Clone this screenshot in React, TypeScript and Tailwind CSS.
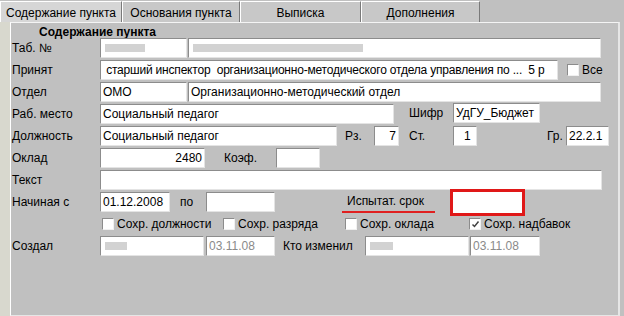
import React from "react";

const Inp = ({ w, children, right, gray, cls = "" }: { w: string; children?: React.ReactNode; right?: boolean; gray?: boolean; cls?: string }) => (
  <div
    className={`${w} h-[20px] shrink-0 bg-white border border-t-[#8c8c8c] border-l-[#8c8c8c] border-b-[#e4e4e4] border-r-[#e4e4e4] px-[2px] leading-[18px] whitespace-nowrap overflow-hidden ${right ? "text-right" : ""} ${gray ? "text-[#8a8a8a]" : "text-black"} ${cls}`}
  >
    {children}
  </div>
);

const Bar = ({ w }: { w: string }) => <div className={`${w} h-[8px] mt-[5px] ml-[2px] bg-[#d2d2d2]`} />;

const Lbl = ({ w, children, cls = "" }: { w: string; children?: React.ReactNode; cls?: string }) => (
  <div className={`${w} shrink-0 whitespace-nowrap ${cls}`}>{children}</div>
);

const Check = ({ checked }: { checked?: boolean }) => (
  <div className="w-[12px] h-[12px] shrink-0 bg-white border border-t-[#8c8c8c] border-l-[#8c8c8c] border-b-[#f0f0f0] border-r-[#f0f0f0] flex items-center justify-center">
    {checked && (
      <svg width="9" height="9" viewBox="0 0 9 9">
        <path d="M1.5 4.5 L3.5 6.5 L7.5 1.5" stroke="#404040" strokeWidth="1.5" fill="none" />
      </svg>
    )}
  </div>
);

const Row = ({ children, cls = "" }: { children: React.ReactNode; cls?: string }) => (
  <div className={`h-[22px] flex items-center ${cls}`}>{children}</div>
);

const Tab = ({ w, label, sel }: { w: string; label: string; sel?: boolean }) => (
  <div
    className={`${w} h-[21px] shrink-0 flex items-center justify-center pt-[2px] border-t border-l border-t-white border-l-white border-r border-r-[#7a7a7a] ${sel ? "bg-[#d6d6d6]" : "bg-[#c8c8c8]"}`}
  >
    {label}
  </div>
);

export default function App() {
  return (
    <div
      className="w-[624px] h-[316px] bg-[#c0c0c0] overflow-hidden text-[12px] text-black"
      style={{ fontFamily: '"Liberation Sans", Arial, sans-serif' }}
    >
      <div className="h-[22px] flex items-end">
        <Tab w="w-[122px]" label="Содержание пункта" sel />
        <Tab w="w-[118px]" label="Основания пункта" />
        <Tab w="w-[121px]" label="Выписка" />
        <Tab w="w-[119px]" label="Дополнения" />
      </div>
      <div className="flex h-[294px]">
        <div className="w-[10px] shrink-0 bg-[#d8d8ce]" />
        <div className="w-[610px] shrink-0 border-t border-l border-t-[#f4f4f4] border-l-white border-r-2 border-r-[#e6e6e6] border-b border-b-[#e6e6e6] pl-[1px]">
          <div className="h-[14px] pl-[27px] font-bold leading-[18px]">Содержание пункта</div>
          <Row>
            <Lbl w="w-[88px]">Таб. №</Lbl>
            <Inp w="w-[87px]"><Bar w="w-[40px]" /></Inp>
            <Inp w="w-[413px]" cls="ml-[1px]"><Bar w="w-[170px]" /></Inp>
          </Row>
          <Row>
            <Lbl w="w-[88px]">Принят</Lbl>
            <Inp w="w-[458px]" cls="tracking-[-0.2px]">&nbsp;старший инспектор &nbsp;организационно-методического отдела управления по ... &nbsp;5 р</Inp>
            <div className="ml-[9px]"><Check /></div>
            <Lbl w="w-[30px]" cls="ml-[3px]">Все</Lbl>
          </Row>
          <Row>
            <Lbl w="w-[88px]">Отдел</Lbl>
            <Inp w="w-[87px]">ОМО</Inp>
            <Inp w="w-[413px]" cls="ml-[1px]">Организационно-методический отдел</Inp>
          </Row>
          <Row>
            <Lbl w="w-[88px]">Раб. место</Lbl>
            <Inp w="w-[294px]">Социальный педагог</Inp>
            <Lbl w="w-[44px]" cls="ml-[15px] -mt-[3px]">Шифр</Lbl>
            <Inp w="w-[87px]" cls="-mt-[3px]">УдГУ_Бюджет</Inp>
          </Row>
          <Row>
            <Lbl w="w-[88px]">Должность</Lbl>
            <Inp w="w-[237px]">Социальный педагог</Inp>
            <Lbl w="w-[29px]" cls="ml-[8px]">Рз.</Lbl>
            <Inp w="w-[25px]" right>7</Inp>
            <Lbl w="w-[44px]" cls="ml-[10px]">Ст.</Lbl>
            <Inp w="w-[24px]" right>1&nbsp;</Inp>
            <Lbl w="w-[19px]" cls="ml-[70px]">Гр.</Lbl>
            <Inp w="w-[43px]" cls="px-0">22.2.1</Inp>
          </Row>
          <Row>
            <Lbl w="w-[88px]">Оклад</Lbl>
            <Inp w="w-[105px]" right>2480</Inp>
            <Lbl w="w-[71px]" cls="text-center">Коэф.</Lbl>
            <Inp w="w-[44px]" />
          </Row>
          <Row>
            <Lbl w="w-[88px]">Текст</Lbl>
            <Inp w="w-[502px]" />
          </Row>
          <Row>
            <Lbl w="w-[88px]">Начиная с</Lbl>
            <Inp w="w-[70px]" cls="px-0">01.12.2008</Inp>
            <Lbl w="w-[26px]" cls="ml-[10px]">по</Lbl>
            <Inp w="w-[69px]" />
            <div className="ml-[67px] w-[93px] h-[20px] pl-[5px] mt-[1px] border-b-2 border-b-[#e02020] leading-[16px] shrink-0">Испытат. срок</div>
            <div className="ml-[15px] w-[75px] h-[27px] shrink-0 bg-white border-[3px] border-[#e01818]" />
          </Row>
          <Row>
            <div className="w-[90px] shrink-0" />
            <div className="w-[121px] shrink-0 flex items-center gap-[3px]"><Check /><span>Сохр. должности</span></div>
            <div className="w-[122px] shrink-0 flex items-center gap-[3px]"><Check /><span>Сохр. разряда</span></div>
            <div className="w-[124px] shrink-0 flex items-center gap-[3px]"><Check /><span>Сохр. оклада</span></div>
            <div className="w-[120px] shrink-0 flex items-center gap-[3px]"><Check checked /><span>Сохр. надбавок</span></div>
          </Row>
          <Row>
            <Lbl w="w-[88px]">Создал</Lbl>
            <Inp w="w-[104px]"><Bar w="w-[22px]" /></Inp>
            <Inp w="w-[69px]" gray cls="ml-[2px] px-0">03.11.08</Inp>
            <Lbl w="w-[82px]" cls="ml-[8px]">Кто изменил</Lbl>
            <Inp w="w-[104px]"><Bar w="w-[23px]" /></Inp>
            <Inp w="w-[70px]" gray cls="ml-[1px] px-0">03.11.08</Inp>
          </Row>
        </div>
      </div>
    </div>
  );
}
